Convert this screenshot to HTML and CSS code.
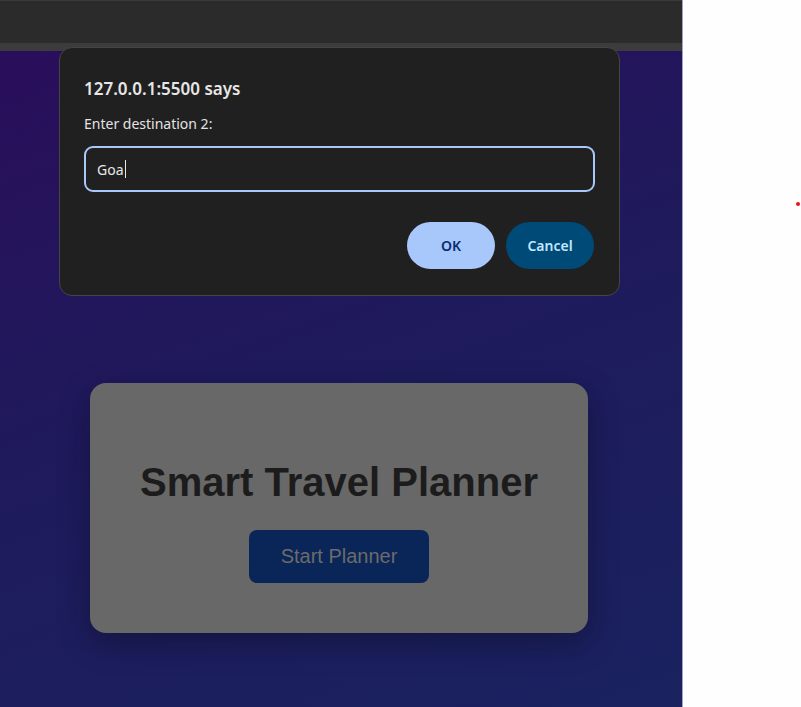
FILE: index.html
```html
<!DOCTYPE html>
<html lang="en">
<head>
<meta charset="utf-8">
<title>Smart Travel Planner</title>
<link rel="stylesheet" href="styles.css">
</head>
<body>
<div class="screen">
  <div class="browser">
    <div class="topbar"></div>
    <div class="strip"></div>
    <main class="page">
      <section class="card">
        <h1 class="card-title">Smart Travel Planner</h1>
        <button class="start-btn">Start Planner</button>
      </section>
    </main>
    <div class="dialog">
      <div class="dialog-title">127.0.0.1:5500 says</div>
      <div class="dialog-label">Enter destination 2:</div>
      <div class="dialog-input"><span class="input-text">Goa</span><span class="caret"></span></div>
      <div class="dialog-actions">
        <button class="btn btn-ok">OK</button>
        <button class="btn btn-cancel">Cancel</button>
      </div>
    </div>
  </div>
  <div class="side"><span class="dot"></span></div>
</div>
</body>
</html>
```
FILE: styles.css
```css
* { box-sizing: border-box; }
html, body { margin: 0; padding: 0; height: 100%; }
body { background: #fefefe; overflow: hidden; }

.screen { display: flex; width: 801px; height: 707px; }

.browser {
  position: relative;
  width: 683px;
  display: flex;
  flex-direction: column;
  border-right: 1px solid #9ea3c2;
}

.topbar { height: 43px; background: #2b2b2b; border-top: 1px solid #3a3a3a; }
.strip { height: 8px; background: #3c3c3c; }

.page {
  flex: 1;
  background: linear-gradient(160deg, #2a0e5b 0%, #1f1a5c 45%, #1a2260 100%);
  padding-top: 332px;
  padding-left: 90px;
}

.card {
  width: 498px;
  height: 250px;
  background: #686868;
  border-radius: 16px;
  box-shadow: 0 10px 30px rgba(10, 10, 30, 0.45);
  display: flex;
  flex-direction: column;
  align-items: center;
  padding-top: 76px;
}

.card-title {
  margin: 0;
  font-family: "Liberation Sans", Arial, sans-serif;
  font-weight: 700;
  font-size: 40px;
  line-height: 46px;
  color: #1c1c1c;
}

.start-btn {
  margin-top: 25px;
  width: 180px;
  height: 53px;
  border: none;
  border-radius: 8px;
  background: #0a2557;
  color: #6b6b6b;
  font-family: "Liberation Sans", Arial, sans-serif;
  font-size: 20px;
}

.dialog {
  position: absolute;
  left: 59px;
  top: 47px;
  width: 561px;
  height: 249px;
  background: #202020;
  border: 1px solid #454545;
  border-radius: 13px;
  padding: 30px 24px 0 24px;
  font-family: "Noto Sans", "Open Sans", sans-serif;
  color: #e3e3e3;
}

.dialog-title {
  font-size: 17px;
  font-weight: 600;
  line-height: 22px;
  color: #e6e6e6;
}

.dialog-label {
  margin-top: 15px;
  font-size: 14px;
  line-height: 18px;
}

.dialog-input {
  margin-top: 13px;
  height: 46px;
  border: 2px solid #a8c7fa;
  border-radius: 9px;
  display: flex;
  align-items: center;
  padding-left: 11px;
  font-size: 14px;
  color: #e8e8e8;
}

.caret {
  display: inline-block;
  width: 1px;
  height: 18px;
  background: #e8e8e8;
  margin-left: 1px;
}

.dialog-actions {
  margin-top: 30px;
  display: flex;
  justify-content: flex-end;
  gap: 11px;
  padding-right: 1px;
}

.btn {
  width: 88px;
  height: 47px;
  border: none;
  border-radius: 24px;
  font-family: "Noto Sans", "Open Sans", sans-serif;
  font-size: 14px;
  font-weight: 600;
}

.btn-ok { background: #a8c7fa; color: #062e6f; }
.btn-cancel { background: #004a77; color: #c2e7ff; }

.side { flex: 1; position: relative; background: #fefefe; }
.dot {
  position: absolute;
  left: 113px;
  top: 202px;
  width: 4px;
  height: 4px;
  border-radius: 50%;
  background: #e8141b;
}
```
